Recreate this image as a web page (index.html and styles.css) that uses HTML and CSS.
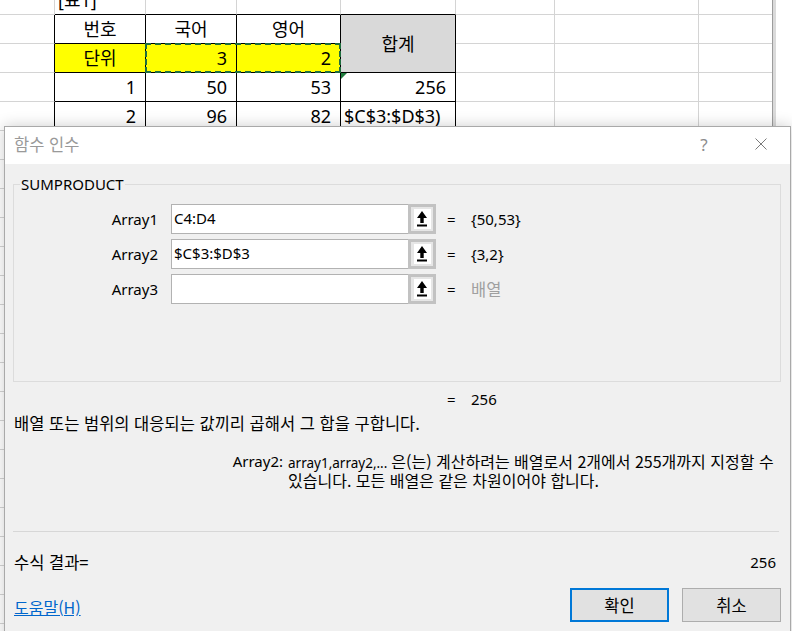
FILE: index.html
```html
<!DOCTYPE html>
<html lang="ko">
<head>
    <meta charset="UTF-8">
    <title>함수 인수</title>
    <link rel="stylesheet" href="styles.css">
</head>
<body>
<div class="sheet">
    <div class="cells">
        <div class="grid">
            <div class="c top"></div>
            <div class="c top eb"><span>[표1]</span></div>
            <div class="c top eb"></div>
            <div class="c top eb"></div>
            <div class="c top eb"></div>
            <div class="c top"></div>
            <div class="c top"></div>
            <div class="c top last"></div>

            <div class="c ed"></div>
            <div class="c d ctr">번호</div>
            <div class="c d ctr">국어</div>
            <div class="c d ctr">영어</div>
            <div class="c d ctr sum">합계</div>
            <div class="c"></div>
            <div class="c"></div>
            <div class="c last"></div>

            <div class="c ed"></div>
            <div class="c d ctr yel">단위</div>
            <div class="c d num yel">3</div>
            <div class="c d num yel">2</div>
            <div class="c"></div>
            <div class="c"></div>
            <div class="c last"></div>

            <div class="c ed"></div>
            <div class="c d num">1</div>
            <div class="c d num">50</div>
            <div class="c d num">53</div>
            <div class="c d num flag">256</div>
            <div class="c"></div>
            <div class="c"></div>
            <div class="c last"></div>

            <div class="c ed"></div>
            <div class="c d num">2</div>
            <div class="c d num">96</div>
            <div class="c d num">82</div>
            <div class="c d txt">$C$3:$D$3)</div>
            <div class="c"></div>
            <div class="c"></div>
            <div class="c last"></div>
        </div>
        <div class="rest"></div>
        <div class="ants"></div>
    </div>
    <div class="split"></div>
</div>

<div class="dialog">
    <div class="titlebar">
        <span class="title ko">함수 인수</span>
        <span class="help">?</span>
        <span class="close">
            <svg width="12" height="12" viewBox="0 0 12 12"><path d="M0.5 0.5L11.5 11.5M11.5 0.5L0.5 11.5" stroke="#7a7a7a" stroke-width="1" fill="none"/></svg>
        </span>
    </div>
    <div class="body">
        <fieldset class="group">
            <legend>SUMPRODUCT</legend>
            <div class="arg">
                <span class="arg-name">Array1</span>
                <div class="field">
                    <span class="field-text">C4:D4</span>
                    <span class="pick"><span class="pick-in"><svg width="10" height="16" viewBox="0 0 10 16"><path d="M5 0L10 7H0Z M3.3 7H6.7V12H3.3Z M0 13.5H10V15.5H0Z" fill="#000"/></svg></span></span>
                </div>
                <span class="eq">=</span>
                <span class="val">{50,53}</span>
            </div>
            <div class="arg">
                <span class="arg-name">Array2</span>
                <div class="field">
                    <span class="field-text">$C$3:$D$3</span>
                    <span class="pick"><span class="pick-in"><svg width="10" height="16" viewBox="0 0 10 16"><path d="M5 0L10 7H0Z M3.3 7H6.7V12H3.3Z M0 13.5H10V15.5H0Z" fill="#000"/></svg></span></span>
                </div>
                <span class="eq">=</span>
                <span class="val">{3,2}</span>
            </div>
            <div class="arg">
                <span class="arg-name">Array3</span>
                <div class="field">
                    <span class="field-text"></span>
                    <span class="pick"><span class="pick-in"><svg width="10" height="16" viewBox="0 0 10 16"><path d="M5 0L10 7H0Z M3.3 7H6.7V12H3.3Z M0 13.5H10V15.5H0Z" fill="#000"/></svg></span></span>
                </div>
                <span class="eq">=</span>
                <span class="val hint ko">배열</span>
            </div>
        </fieldset>

        <div class="result"><span class="eq">=</span><span>256</span></div>
        <div class="desc ko">배열 또는 범위의 대응되는 값끼리 곱해서 그 합을 구합니다.</div>
        <div class="argdesc">
            <span class="argdesc-name">Array2:</span>
            <div class="argdesc-text">
                <div class="line"><span class="lat">array1,array2,...</span> <span class="ko">은(는) 계산하려는 배열로서 2개에서 255개까지 지정할 수</span></div>
                <div class="line ko">있습니다. 모든 배열은 같은 차원이어야 합니다.</div>
            </div>
        </div>
        <div class="sep"></div>
        <div class="formula"><span class="ko">수식 결과=</span><span>256</span></div>
        <div class="footer">
            <a class="help-link ko" href="#">도움말(H)</a>
            <button class="btn primary ko">확인</button>
            <button class="btn ko">취소</button>
        </div>
    </div>
</div>
</body>
</html>
```

FILE: styles.css
```css
* {
    box-sizing: border-box;
    margin: 0;
    padding: 0;
}
body {
    width: 792px;
    height: 631px;
    overflow: hidden;
    position: relative;
    background: #fff;
    font-family: "Noto Sans", "Noto Sans CJK KR", sans-serif;
}
.ko {
    font-family: "Noto Sans CJK KR", sans-serif;
    font-size: 16.5px;
}

/* spreadsheet behind the dialog */
.sheet {
    display: flex;
}
.cells {
    width: 772px;
    position: relative;
}
.grid {
    display: grid;
    grid-template-columns: 55px 91px 91px 104px 115px 99px 144px 73px;
    grid-template-rows: 15px;
    grid-auto-rows: 29px;
    font-size: 18px;
    color: #000;
}
.c {
    border-right: 1px solid #d4d4d4;
    border-bottom: 1px solid #d4d4d4;
    display: flex;
    align-items: center;
    overflow: hidden;
    white-space: nowrap;
    line-height: 1;
}
.last {
    border-right: 0;
}
.top {
    align-items: flex-end;
}
.top span {
    line-height: 27px;
    padding-left: 3px;
}
.eb {
    border-bottom-color: #000;
}
.ed {
    border-right-color: #000;
}
.d {
    border-right-color: #000;
    border-bottom-color: #000;
}
.ctr {
    justify-content: center;
}
.num {
    justify-content: flex-end;
    padding-right: 9px;
}
.txt {
    padding-left: 3px;
}
.yel {
    background: #ffff00;
}
.sum {
    grid-row: span 2;
    background: #d9d9d9;
}
.flag {
    position: relative;
}
.flag:before {
    content: '';
    position: absolute;
    left: 0;
    top: 0;
    border-top: 6px solid #1e7b3c;
    border-right: 6px solid transparent;
}
.rest {
    height: 520px;
    background: repeating-linear-gradient(to bottom, #fff 0, #fff 28px, #d4d4d4 28px, #d4d4d4 29px);
}
.ants {
    position: absolute;
    left: 145px;
    top: 43px;
    width: 196px;
    height: 30px;
    border: 2px dashed #1f6e3e;
}
.split {
    width: 4px;
    height: 631px;
    border-left: 1px solid #9c9c9c;
    background: #dadada;
}

/* dialog window */
.dialog {
    position: absolute;
    left: 4px;
    top: 126px;
    width: 787px;
    height: 520px;
    border: 1px solid #a9a9a9;
    background: #f0f0f0;
    box-shadow: 0 0 14px rgba(0, 0, 0, 0.2);
    font-size: 15px;
    color: #000;
}
.titlebar {
    height: 37px;
    background: #fff;
    display: flex;
    align-items: center;
    padding: 0 0 3px 9px;
    color: #999;
}
.title {
    flex: 1;
    line-height: 20px;
}
.help {
    width: 20px;
    text-align: center;
    font-size: 17px;
    color: #8c8c8c;
}
.close {
    width: 30px;
    margin-left: 32px;
    margin-right: 14px;
    display: flex;
    justify-content: center;
}
.body {
    padding: 0 9px;
}
.group {
    margin: 10px 0 0 -1px;
    width: 768px;
    border: 1px solid #dcdcdc;
    padding: 10px 0 77px 0;
    min-width: 0;
}
.group legend {
    margin-left: 6px;
    padding: 0 1px;
    line-height: 20px;
    height: 20px;
}
.arg {
    display: flex;
    align-items: center;
    height: 30px;
    margin-bottom: 5px;
    line-height: 20px;
}
.arg:last-child {
    margin-bottom: 0;
}
.arg-name {
    width: 144px;
    text-align: right;
    margin-right: 13px;
}
.field {
    width: 265px;
    height: 30px;
    display: flex;
}
.field-text {
    flex: 1;
    background: #fff;
    border: 1px solid #b2b2b2;
    border-right: 0;
    padding-left: 2px;
    line-height: 26px;
}
.pick {
    width: 28px;
    border: 3px solid #c2c2c2;
    background: #e6e6e6;
    display: flex;
    align-items: center;
    justify-content: center;
}
.pick-in {
    width: 17px;
    height: 20px;
    background: #fff;
    display: flex;
    align-items: center;
    justify-content: center;
}
.eq {
    display: inline-block;
    width: 24px;
    margin-left: 11px;
}
.hint {
    color: #a0a0a0;
}
.result {
    margin-top: 7px;
    height: 20px;
    line-height: 20px;
    padding-left: 422px;
}
.desc {
    margin-top: 4px;
    height: 20px;
    line-height: 20px;
}
.argdesc {
    margin-top: 19px;
    display: flex;
}
.argdesc-name {
    width: 274px;
    height: 19px;
    line-height: 19px;
    text-align: right;
    padding-right: 5px;
}
.line {
    height: 19px;
    line-height: 19px;
    white-space: nowrap;
}
.lat {
    font-size: 13.5px;
}
.line .ko {
    font-size: 16px;
}
.line.ko {
    font-size: 16px;
}
.sep {
    margin: 41px 2px 0 -1px;
    border-top: 1px solid #d7d7d7;
}
.formula {
    margin-top: 20px;
    height: 20px;
    display: flex;
    justify-content: space-between;
    line-height: 20px;
    padding-right: 5px;
}
.footer {
    margin-top: 16px;
    height: 34px;
    display: flex;
    align-items: center;
}
.help-link {
    flex: 1;
    color: #0066cc;
    text-decoration: underline;
    line-height: 20px;
    font-size: 16px;
    margin-top: 4px;
}
.btn {
    width: 99px;
    height: 34px;
    margin-left: 13px;
    border: 1px solid #adadad;
    background: #e1e1e1;
    color: #000;
}
.btn.primary {
    border: 2px solid #0078d7;
}
```
